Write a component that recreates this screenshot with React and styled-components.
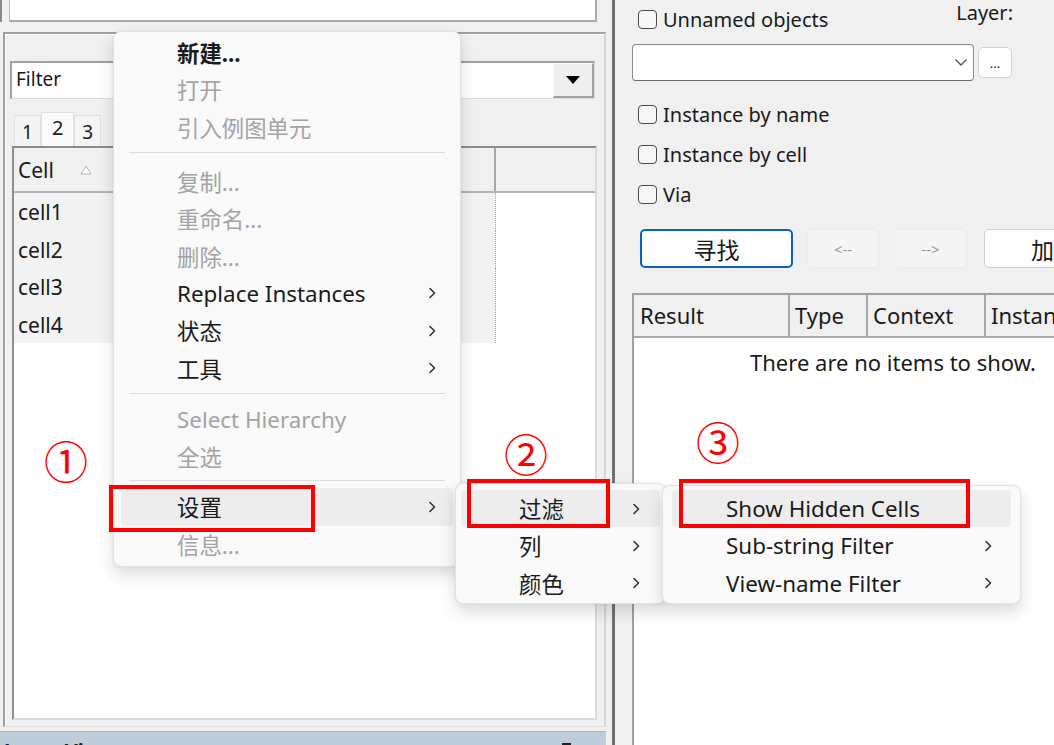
import React from 'react';
import styled, { createGlobalStyle } from 'styled-components';

const UI = `'Noto Sans', 'Noto Sans CJK SC', sans-serif`;

const GlobalStyle = createGlobalStyle`
  html, body { margin: 0; padding: 0; background: #f0f0f0; }
  body { font-family: ${UI}; overflow: hidden; }
  * { box-sizing: border-box; }
`;

const Page = styled.div`
  position: relative;
  width: 1054px;
  height: 745px;
  overflow: hidden;
  display: flex;
  background: #f0f0f0;
  color: #1a1a1a;
  font-family: ${UI};
`;

/* ---------- left column ---------- */
const LeftColumn = styled.div`
  width: 607px;
  flex-shrink: 0;
  display: flex;
  flex-direction: column;
`;

const TopStrip = styled.div`
  height: 32px;
  flex-shrink: 0;
  display: flex;
  align-items: flex-start;
`;

const EdgeMark = styled.div`
  width: 2px;
  height: 22px;
  background: #8a8a8a;
  margin-right: 7px;
`;

const NameBox = styled.div`
  width: 588px;
  height: 22px;
  background: #fff;
  border-left: 1px solid #b8b8b8;
  border-right: 2px solid #a8a8a8;
  border-bottom: 2px solid #a8a8a8;
`;

const Group = styled.div`
  margin-left: 3px;
  width: 603px;
  height: 695px;
  flex-shrink: 0;
  border-top: 2px solid #a0a0a0;
  border-left: 2px solid #a0a0a0;
  border-right: 2px solid #d6d6d6;
  border-bottom: 1px solid #e2e2e2;
  box-shadow: inset 1px 1px 0 #fdfdfd;
  padding: 27px 0 0 5px;
  display: flex;
  flex-direction: column;
`;

const FilterCombo = styled.div`
  width: 585px;
  height: 38px;
  flex-shrink: 0;
  display: flex;
  background: #fff;
  border-top: 2px solid #a0a0a0;
  border-left: 2px solid #a0a0a0;
  border-right: 1px solid #dadada;
  border-bottom: 1px solid #dadada;
`;

const FilterText = styled.div`
  flex: 1;
  padding-left: 4px;
  font-size: 19px;
  line-height: 33px;
`;

const DropButton = styled.div`
  width: 41px;
  background: #efefef;
  border-top: 1px solid #fff;
  border-left: 1px solid #fff;
  border-right: 2px solid #a0a0a0;
  border-bottom: 2px solid #a0a0a0;
  display: flex;
  align-items: center;
  justify-content: center;
`;

const TabsRow = styled.div`
  margin: 13px 0 0 4px;
  height: 34px;
  flex-shrink: 0;
  display: flex;
  align-items: flex-end;
`;

const Tab = styled.div`
  height: ${p => (p.$active ? 34 : 31)}px;
  padding: 0 ${p => (p.$active ? 10 : 7)}px;
  background: ${p => (p.$active ? '#fafafa' : '#f4f4f4')};
  border: 1px solid #e0e0e0;
  border-bottom: none;
  font-size: ${p => (p.$active ? 20 : 19)}px;
  line-height: ${p => (p.$active ? 30 : 32)}px;
`;

const ListView = styled.div`
  margin-left: 2px;
  width: 585px;
  height: 574px;
  flex-shrink: 0;
  background: #fff;
  border-top: 2px solid #8d8d8d;
  border-left: 2px solid #8d8d8d;
  border-right: 2px solid #dadada;
  border-bottom: 2px solid #dadada;
  display: flex;
  flex-direction: column;
`;

const ListHeader = styled.div`
  height: 45px;
  flex-shrink: 0;
  display: flex;
  background: #f0f0f0;
  border-bottom: 2px solid #b4b4b4;
`;

const HeaderCell = styled.div`
  width: ${p => p.$w || 0}px;
  flex: ${p => (p.$w ? 'none' : 1)};
  display: flex;
  align-items: center;
  gap: 26px;
  padding-left: 4px;
  font-size: 21px;
  border-right: ${p => (p.$w ? '2px solid #a8a8a8' : 'none')};
`;

const ListRow = styled.div`
  height: 37.5px;
  flex-shrink: 0;
  display: flex;
`;

const ListCell = styled.div`
  width: 482px;
  background: #f2f2f2;
  border-right: 1px dotted #a8a8a8;
  padding-left: 4px;
  font-size: 21px;
  line-height: 38px;
`;

const BottomBar = styled.div`
  margin-top: 4px;
  width: 606px;
  flex: 1;
  min-height: 0;
  overflow: hidden;
  background: #bfcddb;
  border-top: 1px solid #a9b8c6;
  position: relative;
  padding: 7px 0 0 4px;
  font-size: 20px;
  font-weight: bold;
  line-height: 24px;
  color: #202020;
`;

const PinMark = styled.div`
  position: absolute;
  left: 562px;
  top: 11px;
  width: 9px;
  height: 4px;
  background: #222;
`;

/* ---------- splitter ---------- */
const Splitter = styled.div`
  width: 8px;
  flex-shrink: 0;
  border-right: 3px solid #707070;
`;

/* ---------- right panel ---------- */
const RightPanel = styled.div`
  width: 439px;
  flex-shrink: 0;
  padding-left: 17px;
  display: flex;
  flex-direction: column;
`;

const TopRow = styled.div`
  height: 40px;
  flex-shrink: 0;
  display: flex;
  align-items: flex-start;
`;

const CheckRow = styled.label`
  height: ${p => p.$h || 40}px;
  margin-left: 6px;
  margin-top: ${p => p.$top || 0}px;
  display: flex;
  align-items: center;
  gap: 6px;
  font-size: 20px;
  flex-shrink: 0;
`;

const Box = styled.span`
  width: 19px;
  height: 19px;
  border: 1.5px solid #4a4a4a;
  border-radius: 4px;
  background: #f7f7f7;
`;

const LayerLabel = styled.div`
  margin-left: auto;
  margin-right: 41px;
  font-size: 20px;
  line-height: 26px;
`;

const ComboRow = styled.div`
  margin-top: 4px;
  display: flex;
  align-items: center;
  flex-shrink: 0;
`;

const LayerCombo = styled.div`
  width: 342px;
  height: 37px;
  background: #fff;
  border: 1.5px solid #8a8a8a;
  border-bottom-color: #6a6a6a;
  border-radius: 4px;
  display: flex;
  align-items: center;
  justify-content: flex-end;
  padding-right: 5px;
`;

const MoreButton = styled.div`
  width: 34px;
  height: 31px;
  margin-left: 4px;
  background: #fdfdfd;
  border: 1px solid #d2d2d2;
  border-radius: 5px;
  font-size: 13px;
  line-height: 30px;
  text-align: center;
  color: #222;
`;

const CheckList = styled.div`
  margin-top: 13px;
  display: flex;
  flex-direction: column;
  flex-shrink: 0;
`;

const ButtonRow = styled.div`
  margin: 15px 0 0 8px;
  display: flex;
  flex-shrink: 0;
`;

const Button = styled.div`
  width: ${p => p.$w}px;
  height: 39px;
  margin-right: ${p => p.$gap || 0}px;
  flex-shrink: 0;
  border-radius: 5px;
  display: flex;
  align-items: center;
  justify-content: ${p => (p.$left ? 'flex-start' : 'center')};
  padding-left: ${p => (p.$left ? 46 : 0)}px;
  font-size: ${p => (p.$small ? 15 : 23)}px;
  background: ${p => (p.$disabled ? '#f5f5f5' : '#fdfdfd')};
  color: ${p => (p.$disabled ? '#9a9a9a' : '#1a1a1a')};
  border: ${p =>
    p.$focus ? '2px solid #0a62c0' : p.$disabled ? '1px solid #ebebeb' : '1px solid #cfcfcf'};
`;

const ResultTable = styled.div`
  margin-top: 25px;
  width: 520px;
  flex: 1;
  flex-shrink: 0;
  background: #fff;
  border-top: 2px solid #a0a0a0;
  border-left: 2px solid #a0a0a0;
  display: flex;
  flex-direction: column;
`;

const TableHeader = styled.div`
  height: 43px;
  display: flex;
  background: #f0f0f0;
  border-bottom: 2px solid #a8a8a8;
`;

const TH = styled.div`
  width: ${p => p.$w}px;
  flex-shrink: 0;
  padding-left: ${p => p.$pad || 5}px;
  font-size: 22px;
  line-height: 40px;
  border-right: 2px solid #a8a8a8;
  white-space: nowrap;
`;

const EmptyNote = styled.div`
  padding-top: 9px;
  text-align: center;
  font-size: 22px;
  line-height: 30px;
`;

/* ---------- context menus ---------- */
const Menu = styled.div`
  position: absolute;
  left: ${p => p.$x}px;
  top: ${p => p.$y}px;
  width: ${p => p.$w}px;
  padding: ${p => p.$pt}px 0 0;
  height: ${p => p.$h}px;
  background: #f9f9f9;
  border: 1px solid #e2e2e2;
  border-radius: 8px;
  box-shadow: 0 8px 16px rgba(0, 0, 0, 0.14), 0 0 3px rgba(0, 0, 0, 0.06);
  z-index: ${p => p.$z};
  font-family: ${UI};
`;

const Item = styled.div`
  height: 37.3px;
  margin: 0 ${p => p.$inset}px;
  padding: 0 ${p => p.$pr}px 0 ${p => p.$pl}px;
  border-radius: 4px;
  display: flex;
  align-items: center;
  justify-content: space-between;
  font-size: 22.4px;
  font-weight: ${p => (p.$bold ? 700 : 400)};
  color: ${p => (p.$disabled ? '#a3a3a3' : '#1a1a1a')};
  background: ${p => (p.$active ? '#ededed' : 'transparent')};
  white-space: nowrap;
`;

const Separator = styled.div`
  height: 1px;
  margin: ${p => p.$top}px 15px ${p => p.$bottom}px;
  background: #dcdcdc;
`;

/* ---------- annotations ---------- */
const RedBox = styled.div`
  position: absolute;
  left: ${p => p.$x}px;
  top: ${p => p.$y}px;
  width: ${p => p.$w}px;
  height: ${p => p.$h}px;
  border: 4px solid #ff0000;
  z-index: 10;
`;

const Marker = styled.div`
  position: absolute;
  left: ${p => p.$x}px;
  top: ${p => p.$y}px;
  font-family: 'Noto Sans CJK SC', sans-serif;
  font-size: 44px;
  line-height: 44px;
  color: #ff0000;
  z-index: 10;
`;

/* ---------- icons ---------- */
const Chevron = () => (
  <svg width="10" height="14" viewBox="0 0 10 14">
    <path d="M3 2.5 L7.5 7 L3 11.5" fill="none" stroke="#333" strokeWidth="1.6" strokeLinecap="round" strokeLinejoin="round" />
  </svg>
);

const DownTriangle = () => (
  <svg width="14" height="8" viewBox="0 0 14 8">
    <polygon points="0,0 14,0 7,8" fill="#000" />
  </svg>
);

const SortUp = () => (
  <svg width="12" height="10" viewBox="0 0 12 10">
    <polygon points="6,1 11,9 1,9" fill="#fff" stroke="#b5b5b5" strokeWidth="1" />
  </svg>
);

const ThinChevronDown = () => (
  <svg width="14" height="9" viewBox="0 0 14 9">
    <path d="M1.5 1.5 L7 7 L12.5 1.5" fill="none" stroke="#555" strokeWidth="1.4" />
  </svg>
);

const MenuEntry = ({ label, sub, ...rest }) => (
  <Item {...rest}>
    <span>{label}</span>
    {sub && <Chevron />}
  </Item>
);

export default function App() {
  const m1 = { $inset: 7, $pl: 56, $pr: 16 };
  const m2 = { $inset: 5, $pl: 58, $pr: 19 };
  const m3 = { $inset: 9, $pl: 54, $pr: 18 };
  return (
    <Page>
      <GlobalStyle />
      <LeftColumn>
        <TopStrip>
          <EdgeMark />
          <NameBox />
        </TopStrip>
        <Group>
          <FilterCombo>
            <FilterText>Filter</FilterText>
            <DropButton>
              <DownTriangle />
            </DropButton>
          </FilterCombo>
          <TabsRow>
            <Tab>1</Tab>
            <Tab $active>2</Tab>
            <Tab>3</Tab>
          </TabsRow>
          <ListView>
            <ListHeader>
              <HeaderCell $w={482}>
                Cell <SortUp />
              </HeaderCell>
              <HeaderCell />
            </ListHeader>
            {['cell1', 'cell2', 'cell3', 'cell4'].map(c => (
              <ListRow key={c}>
                <ListCell>{c}</ListCell>
              </ListRow>
            ))}
          </ListView>
        </Group>
        <BottomBar>
          Layer View
          <PinMark />
        </BottomBar>
      </LeftColumn>

      <Splitter />

      <RightPanel>
        <TopRow>
          <CheckRow $h={26} $top={6}>
            <Box /> Unnamed objects
          </CheckRow>
          <LayerLabel>Layer:</LayerLabel>
        </TopRow>
        <ComboRow>
          <LayerCombo>
            <ThinChevronDown />
          </LayerCombo>
          <MoreButton>...</MoreButton>
        </ComboRow>
        <CheckList>
          <CheckRow>
            <Box /> Instance by name
          </CheckRow>
          <CheckRow>
            <Box /> Instance by cell
          </CheckRow>
          <CheckRow>
            <Box /> Via
          </CheckRow>
        </CheckList>
        <ButtonRow>
          <Button $w={153} $gap={14} $focus>寻找</Button>
          <Button $w={72} $gap={15} $disabled $small>&lt;--</Button>
          <Button $w={73} $gap={17} $disabled $small>--&gt;</Button>
          <Button $w={150} $left>加入</Button>
        </ButtonRow>
        <ResultTable>
          <TableHeader>
            <TH $w={156} $pad={6}>Result</TH>
            <TH $w={78}>Type</TH>
            <TH $w={118}>Context</TH>
            <TH $w={160}>Instance</TH>
          </TableHeader>
          <EmptyNote>There are no items to show.</EmptyNote>
        </ResultTable>
      </RightPanel>

      <Menu $x={113} $y={31} $w={348} $h={536} $pt={2} $z={3}>
        <MenuEntry {...m1} $bold label="新建..." />
        <MenuEntry {...m1} $disabled label="打开" />
        <MenuEntry {...m1} $disabled label="引入例图单元" />
        <Separator $top={6} $bottom={10} />
        <MenuEntry {...m1} $disabled label="复制..." />
        <MenuEntry {...m1} $disabled label="重命名..." />
        <MenuEntry {...m1} $disabled label="删除..." />
        <MenuEntry {...m1} label="Replace Instances" sub />
        <MenuEntry {...m1} label="状态" sub />
        <MenuEntry {...m1} label="工具" sub />
        <Separator $top={6} $bottom={7} />
        <MenuEntry {...m1} $disabled label="Select Hierarchy" />
        <MenuEntry {...m1} $disabled label="全选" />
        <Separator $top={5} $bottom={7} />
        <MenuEntry {...m1} $active label="设置" sub />
        <MenuEntry {...m1} $disabled label="信息..." />
      </Menu>

      <Menu $x={455} $y={483} $w={211} $h={121} $pt={6} $z={4}>
        <MenuEntry {...m2} $active label="过滤" sub />
        <MenuEntry {...m2} label="列" sub />
        <MenuEntry {...m2} label="颜色" sub />
      </Menu>

      <Menu $x={662} $y={485} $w={359} $h={119} $pt={4} $z={5}>
        <MenuEntry {...m3} $active label="Show Hidden Cells" />
        <MenuEntry {...m3} label="Sub-string Filter" sub />
        <MenuEntry {...m3} label="View-name Filter" sub />
      </Menu>

      <RedBox $x={109} $y={485} $w={206} $h={47} />
      <RedBox $x={467} $y={479} $w={143} $h={49} />
      <RedBox $x={679} $y={479} $w={291} $h={49} />
      <Marker $x={44} $y={438}>①</Marker>
      <Marker $x={504} $y={431}>②</Marker>
      <Marker $x={696} $y={419}>③</Marker>
    </Page>
  );
}
